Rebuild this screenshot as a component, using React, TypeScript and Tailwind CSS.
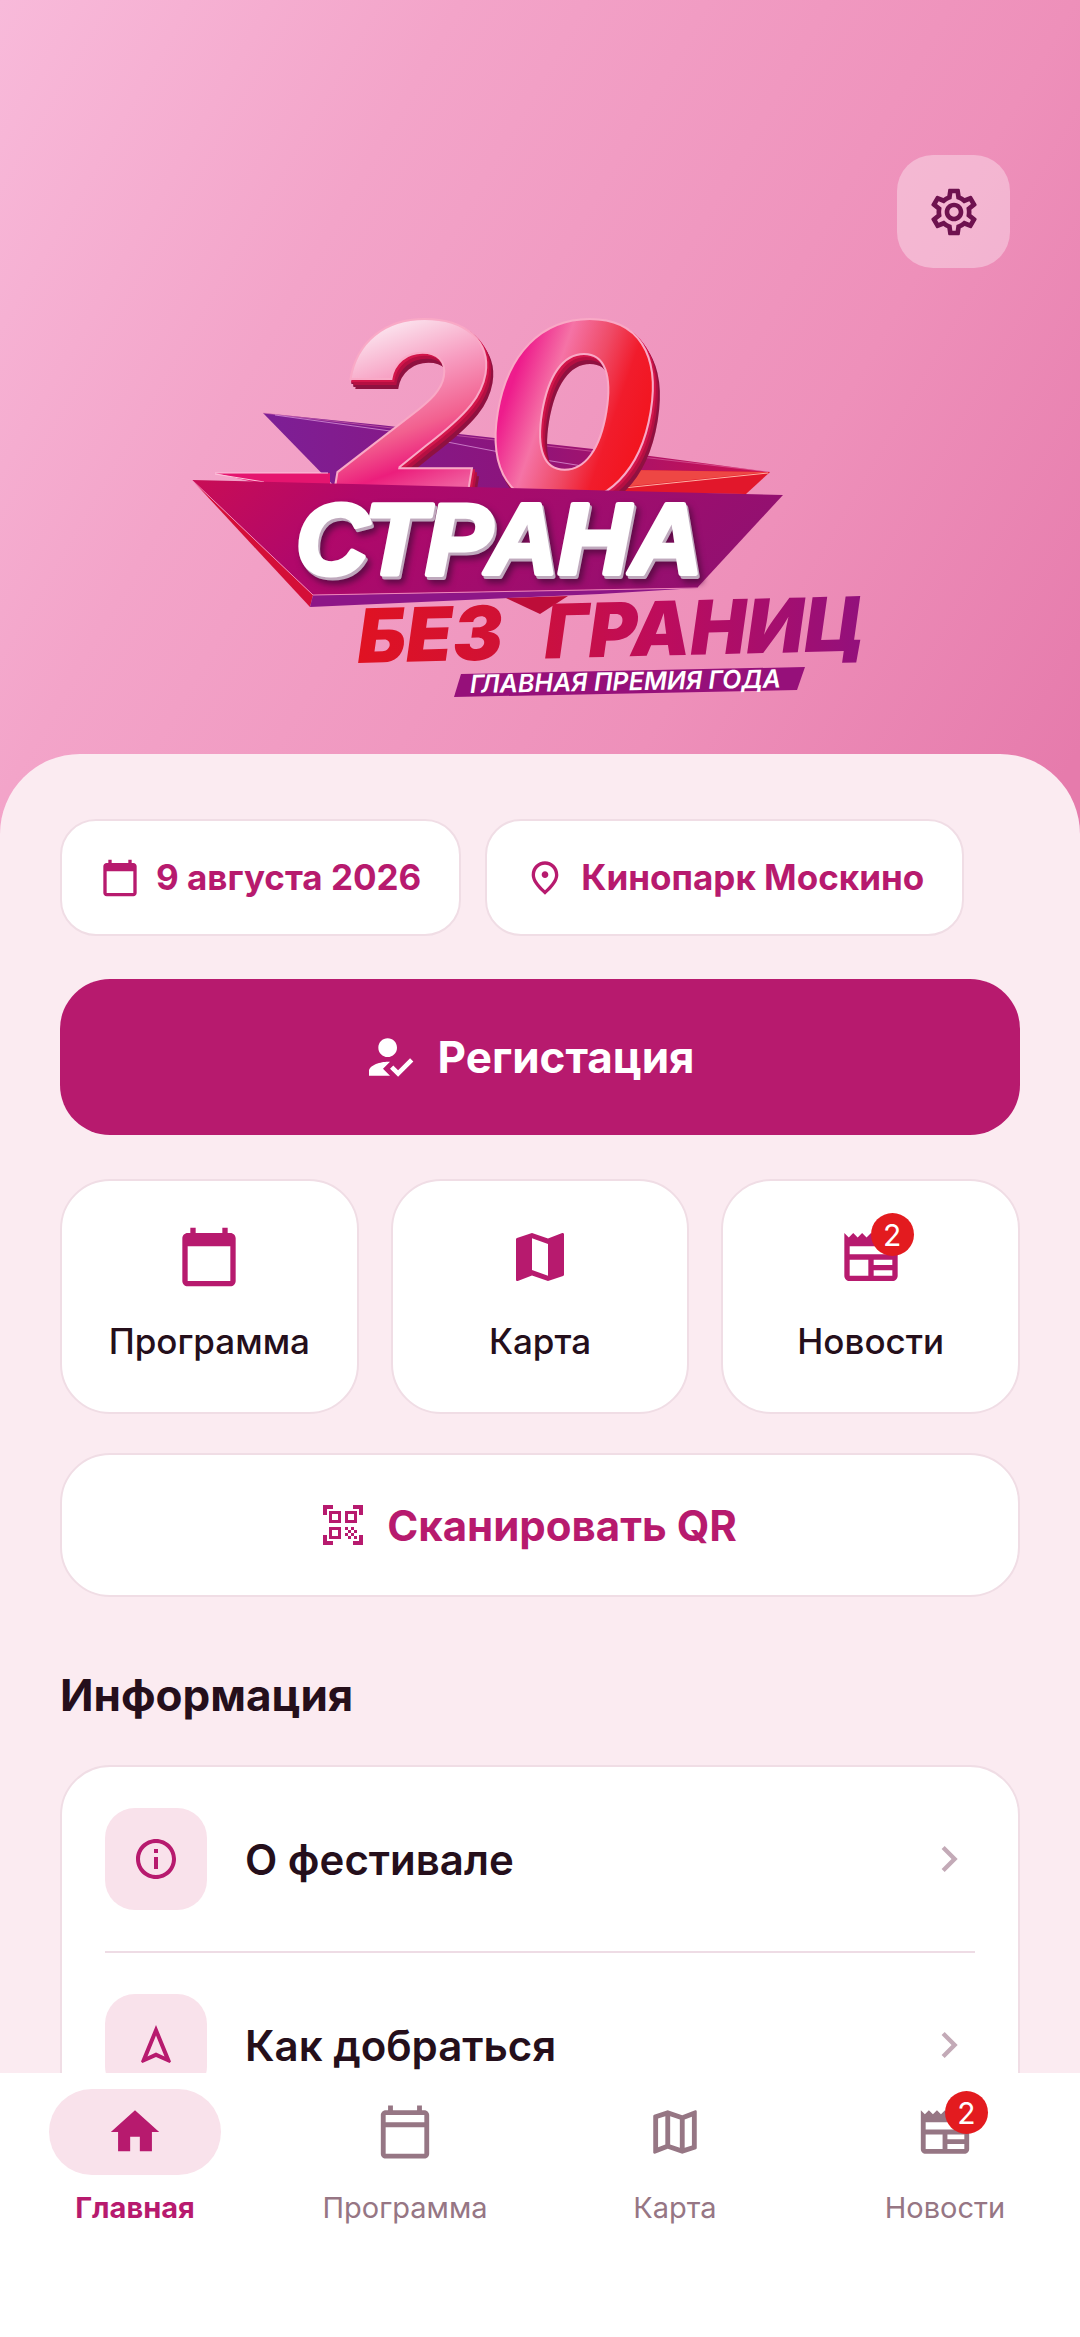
import type { ReactNode } from "react";
import type { IconType } from "react-icons";
import {
  MdCalendarToday,
  MdChevronRight,
  MdHome,
  MdHowToReg,
  MdInfoOutline,
  MdMap,
  MdNewspaper,
  MdOutlineCalendarToday,
  MdOutlineMap,
  MdOutlineNavigation,
  MdOutlinePlace,
  MdOutlineSettings,
  MdQrCodeScanner,
} from "react-icons/md";

type Tile = { label: string; icon: IconType; badge?: number };

const chips: Tile[] = [
  { label: "9 августа 2026", icon: MdCalendarToday },
  { label: "Кинопарк Москино", icon: MdOutlinePlace },
];

const tiles: Tile[] = [
  { label: "Программа", icon: MdCalendarToday },
  { label: "Карта", icon: MdMap },
  { label: "Новости", icon: MdNewspaper, badge: 2 },
];

const infoLinks: Tile[] = [
  { label: "О фестивале", icon: MdInfoOutline },
  { label: "Как добраться", icon: MdOutlineNavigation },
];

const tabs: Tile[] = [
  { label: "Главная", icon: MdHome },
  { label: "Программа", icon: MdOutlineCalendarToday },
  { label: "Карта", icon: MdOutlineMap },
  { label: "Новости", icon: MdNewspaper, badge: 2 },
];

function Badged({ count, children }: { count?: number; children: ReactNode }) {
  return (
    <span className="relative block">
      {children}
      {count ? (
        <span className="absolute -top-3 left-1/2 flex h-[43px] w-[43px] items-center justify-center rounded-full bg-[#e31b1f] text-[30px] leading-none font-normal text-white">
          {count}
        </span>
      ) : null}
    </span>
  );
}

function Logo() {
  return (
    <svg viewBox="180 300 700 410" className="w-[700px] max-w-full" role="img" aria-label="20 Страна без границ">
      <defs>
        <linearGradient id="band" x1="0" x2="1" y1="0" y2="0.2">
          <stop offset="0" stopColor="#c90d55" />
          <stop offset="0.3" stopColor="#b1086a" />
          <stop offset="1" stopColor="#931070" />
        </linearGradient>
        <linearGradient id="wing" x1="0" x2="1" y1="0" y2="0">
          <stop offset="0" stopColor="#7d1f96" />
          <stop offset="0.5" stopColor="#8c147c" />
          <stop offset="1" stopColor="#d0104f" />
        </linearGradient>
        <linearGradient id="two" gradientUnits="userSpaceOnUse" x1="380" x2="440" y1="330" y2="492">
          <stop offset="0" stopColor="#fbe0ec" />
          <stop offset="0.3" stopColor="#f79cc0" />
          <stop offset="0.6" stopColor="#f2608f" />
          <stop offset="0.8" stopColor="#ec1e7c" />
          <stop offset="1" stopColor="#f0609f" />
        </linearGradient>
        <linearGradient id="zero" gradientUnits="userSpaceOnUse" x1="510" x2="655" y1="390" y2="440">
          <stop offset="0" stopColor="#ee1c8c" />
          <stop offset="0.25" stopColor="#f573a6" />
          <stop offset="0.5" stopColor="#ef4a66" />
          <stop offset="0.7" stopColor="#f11c2c" />
          <stop offset="1" stopColor="#f3121a" />
        </linearGradient>
        <linearGradient id="words" gradientUnits="userSpaceOnUse" x1="358" x2="864" y1="0" y2="0">
          <stop offset="0" stopColor="#e01222" />
          <stop offset="0.3" stopColor="#cf1136" />
          <stop offset="0.6" stopColor="#bd0c5c" />
          <stop offset="1" stopColor="#92107c" />
        </linearGradient>
      </defs>

      {/* wings behind the digits */}
      <path d="M263 413 380 425 620 452 770 472 700 492H340Z" fill="url(#wing)" />
      <path d="M263 413 770 472" stroke="#e879b4" strokeWidth="1" fill="none" opacity=".5" />
      <path d="M275 415 390 431 520 456 620 472" stroke="#e2a0e0" strokeWidth="1" fill="none" opacity=".7" />
      <path d="M215 473H330V484H262Z" fill="#e5156f" />
      <path d="M215 473H328M215 474 264 482" stroke="#ffc3dc" strokeWidth="1" fill="none" />
      <path d="M560 492 632 470 770 472 746 494Z" fill="#e2172b" />
      <path d="M632 470 770 472 612 488Z" fill="#ee4744" />
      <path d="M604 490 768 473" stroke="#ffb1a4" strokeWidth="1" fill="none" />

      <g
        fontFamily="Inter, sans-serif"
        fontWeight="800"
        fontStyle="italic"
        fontSize="250"
        stroke="#f9a9c6"
        strokeWidth="2"
        className="[filter:drop-shadow(2px_2px_0_#d3164b)_drop-shadow(2px_3px_0_#b50f42)_drop-shadow(2px_4px_0_#8f1140)]"
      >
        <text x="330" y="503" fill="url(#two)">2</text>
        <text x="484" y="503" fill="url(#zero)">0</text>
      </g>

      <path d="M192 480 783 495 697 588 313 595Z" fill="url(#band)" />
      <path d="M192 480 313 595 310 607Z" fill="#d40f38" />
      <path d="M313 595 697 588 600 594 310 607Z" fill="#8d1687" />
      <path d="M192 480 313 595 697 588" stroke="#ef86b9" strokeWidth="1" fill="none" />
      <path d="M506 598 568 596 540 614Z" fill="#bd0d39" />

      <text
        x="296"
        y="574"
        fontFamily="'Liberation Sans', sans-serif"
        fontWeight="700"
        fontStyle="italic"
        fontSize="100"
        fill="#fff"
        stroke="#fff"
        strokeWidth="5"
        strokeLinejoin="round"
        className="[filter:drop-shadow(2px_3px_0_#bfa9bd)_drop-shadow(3px_4px_3px_#5c0a45)]"
      >
        СТРАНА
      </text>

      <g
        fontFamily="Inter, sans-serif"
        fontWeight="900"
        fontStyle="italic"
        fontSize="75"
        fill="url(#words)"
        transform="rotate(-1.4 358 662)"
      >
        <text x="358" y="663">БЕЗ</text>
        <text x="545" y="663">ГРАНИЦ</text>
      </g>

      <path d="M461 674 805 667 797 690 454 697Z" fill="#96107a" />
      <text
        x="470"
        y="693"
        fontFamily="Inter, sans-serif"
        fontWeight="600"
        fontStyle="italic"
        fontSize="25"
        fill="#fff"
        transform="rotate(-1 468 693)"
      >
        ГЛАВНАЯ ПРЕМИЯ ГОДА
      </text>
    </svg>
  );
}

export default function App() {
  return (
    <div className="flex h-screen flex-col bg-white font-['Inter','Noto_Sans',sans-serif] text-[#250f1b]">
      <main className="min-h-0 flex-1 overflow-y-auto bg-[linear-gradient(120deg,#f8bada_0px,#f3a4c9_400px,#ee90ba_930px,#e67bac_1310px)] [scrollbar-width:none]">
        <header className="flex flex-col items-center pt-[155px]">
          <button
            type="button"
            aria-label="Настройки"
            className="mr-[70px] flex h-[113px] w-[113px] items-center justify-center self-end rounded-[36px] bg-white/35 text-[#6e124f]"
          >
            <MdOutlineSettings className="h-14 w-14" />
          </button>
          <div className="mt-8 mr-5 flex justify-center">
            <Logo />
          </div>
        </header>

        <div className="mt-11 rounded-t-[80px] bg-[#fbebf1] px-[60px] pt-[65px] pb-16">
          <ul className="flex flex-wrap gap-6">
            {chips.map(({ label, icon: Icon }) => (
              <li
                key={label}
                className="flex h-[117px] items-center gap-4 rounded-[36px] border-2 border-[#f0dde5] bg-white px-[38px] text-[35px] font-bold text-[#b71a6e]"
              >
                <Icon className="h-10 w-10" />
                {label}
              </li>
            ))}
          </ul>

          <button
            type="button"
            className="mt-[43px] flex h-[156px] w-full items-center justify-center gap-5 rounded-[50px] bg-[#b71a6e] pr-6 text-[44px] font-bold text-white"
          >
            <MdHowToReg className="h-14 w-14" />
            Регистация
          </button>

          <div className="mt-11 grid grid-cols-3 gap-8">
            {tiles.map(({ label, icon: Icon, badge }) => (
              <button
                key={label}
                type="button"
                className="flex h-[235px] flex-col items-center rounded-[50px] border-2 border-[#f0dde5] bg-white pt-11 text-[35px] font-medium"
              >
                <Badged count={badge}>
                  <Icon className="h-16 w-16 text-[#b71a6e]" />
                </Badged>
                <span className="mt-[26px]">{label}</span>
              </button>
            ))}
          </div>

          <button
            type="button"
            className="mt-[39px] flex h-36 w-full items-center justify-center gap-5 rounded-[50px] border-2 border-[#f0dde5] bg-white pr-6 text-[42px] font-bold text-[#b71a6e]"
          >
            <MdQrCodeScanner className="h-12 w-12" />
            Сканировать QR
          </button>

          <h2 className="mt-[68px] text-[44px] leading-[60px] font-bold">Информация</h2>

          <ul className="mt-10 rounded-[50px] border-2 border-[#f0dde5] bg-white px-[43px] divide-y-2 divide-[#eedce5]">
            {infoLinks.map(({ label, icon: Icon }) => (
              <li key={label}>
                <a href="#" className="flex items-center py-[41px]">
                  <span className="flex h-[102px] w-[102px] items-center justify-center rounded-[30px] bg-[#f9e2eb] text-[#b71a6e]">
                    <Icon className="h-12 w-12" />
                  </span>
                  <span className="ml-[38px] flex-1 text-[42px] font-semibold">{label}</span>
                  <MdChevronRight className="h-[52px] w-[52px] text-[#c3aab7]" />
                </a>
              </li>
            ))}
          </ul>
        </div>
      </main>

      <nav className="grid h-[264px] shrink-0 grid-cols-4 items-start bg-white pt-4">
        {tabs.map(({ label, icon: Icon, badge }, i) => (
          <a
            key={label}
            href="#"
            aria-current={i === 0 ? "page" : undefined}
            className={
              i === 0
                ? "flex flex-col items-center text-[29px] font-bold text-[#b71a6e]"
                : "flex flex-col items-center text-[29px] text-[#967684]"
            }
          >
            <span
              className={
                i === 0
                  ? "flex h-[86px] w-[172px] items-center justify-center rounded-full bg-[#f9e2eb]"
                  : "flex h-[86px] w-[172px] items-center justify-center"
              }
            >
              <Badged count={badge}>
                <Icon className="h-[58px] w-[58px]" />
              </Badged>
            </span>
            <span className="mt-[11px]">{label}</span>
          </a>
        ))}
      </nav>
    </div>
  );
}
